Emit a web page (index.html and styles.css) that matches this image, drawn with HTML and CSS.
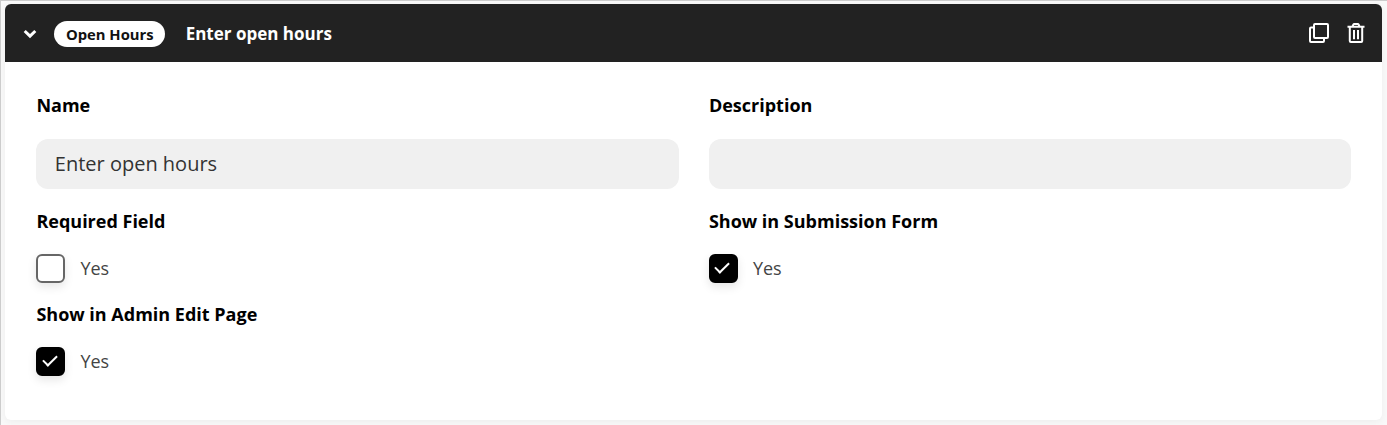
FILE: index.html
```html
<!DOCTYPE html>
<html lang="en">

<head>
  <meta charset="UTF-8">
  <meta name="viewport" content="width=device-width, initial-scale=1.0">
  <title>Open Hours</title>
  <link rel="stylesheet" href="styles.css">
</head>

<body>
  <div class="fields">
    <div class="field-card">
      <div class="field-header">
        <svg class="toggle" width="14" height="10" viewBox="0 0 14 10">
          <path d="M1.7 2 L7 7.1 L12.3 2" />
        </svg>
        <span class="field-type">Open Hours</span>
        <span class="field-title">Enter open hours</span>
        <div class="actions">
          <svg class="icon" width="22" height="22" viewBox="0 0 22 22">
            <path d="M7 2 H19 Q20 2 20 3 V15 Q20 16 19 16 H7 Q6 16 6 15 V3 Q6 2 7 2 Z M5.5 5.5 H3 Q2 5.5 2 6.5 V19 Q2 20 3 20 H15 Q16 20 16 19 V16.5" />
          </svg>
          <svg class="icon" width="18" height="22" viewBox="0 0 18 22">
            <path d="M0.5 4.8 H17.5 M5.5 4.5 L6.3 2.7 Q6.6 2 7.4 2 H10.6 Q11.4 2 11.7 2.7 L12.5 4.5 M2.8 5 V19 Q2.8 20 3.8 20 H14.2 Q15.2 20 15.2 19 V5 M7 8 V17.2 M11 8 V17.2" />
          </svg>
        </div>
      </div>

      <div class="field-body">
        <div class="field-group">
          <label class="label" for="name">Name</label>
          <input type="text" id="name" value="Enter open hours">
        </div>
        <div class="field-group">
          <label class="label" for="description">Description</label>
          <input type="text" id="description">
        </div>
        <div class="field-group">
          <div class="label">Required Field</div>
          <label class="check"><input type="checkbox"><span>Yes</span></label>
        </div>
        <div class="field-group">
          <div class="label">Show in Submission Form</div>
          <label class="check"><input type="checkbox" checked><span>Yes</span></label>
        </div>
        <div class="field-group">
          <div class="label">Show in Admin Edit Page</div>
          <label class="check"><input type="checkbox" checked><span>Yes</span></label>
        </div>
      </div>
    </div>
  </div>
</body>

</html>
```
FILE: styles.css
```css
* {
  box-sizing: border-box;
}

body {
  margin: 0;
  font-family: "Open Sans", "Noto Sans", sans-serif;
  background-color: #f9f9f9;
}

.fields {
  height: 425px;
  padding: 3.4px 4.6px 4.6px 4.4px;
  border-top: 1px solid #ccc;
  border-left: 1px solid #ccc;
  overflow: hidden;
}

.field-card {
  height: 416px;
  border-radius: 6px;
  background-color: #fff;
  box-shadow: 0 2px 8px rgba(0, 0, 0, 0.05);
}

.field-header {
  display: flex;
  align-items: center;
  height: 58px;
  padding: 1px 17px 0 18px;
  border-radius: 6px 6px 0 0;
  background-color: #222;
  color: #fff;
}

.toggle {
  fill: none;
  stroke: #fff;
  stroke-width: 3;
}

.field-type {
  margin-left: 17px;
  padding: 0 11.5px;
  border-radius: 13px;
  background-color: #fff;
  color: #111;
  font-size: 14.8px;
  font-weight: 700;
  line-height: 26px;
}

.field-title {
  margin-left: 20.5px;
  font-size: 17px;
  font-weight: 700;
}

.actions {
  display: flex;
  gap: 16.5px;
  margin-left: auto;
  margin-right: 0.6px;
  margin-bottom: 1px;
}

.icon {
  fill: none;
  stroke: #fff;
  stroke-width: 2;
}

.field-body {
  display: grid;
  grid-template-columns: 1fr 1fr;
  column-gap: 30px;
  padding: 30.8px 31px;
}

.label {
  display: block;
  color: #000;
  font-size: 18px;
  font-weight: 700;
  line-height: 25px;
}

input[type="text"] {
  display: block;
  width: 100%;
  height: 50px;
  margin: 21px 0 20px;
  padding: 0 18.4px 1px;
  border: none;
  border-radius: 12px;
  background-color: #f0f0f0;
  color: #333;
  font-family: inherit;
  font-size: 20px;
}

.check {
  display: flex;
  align-items: center;
  gap: 15px;
  height: 30px;
  margin: 19px 0;
  color: #444;
  font-size: 18px;
}

input[type="checkbox"] {
  appearance: none;
  width: 29px;
  height: 29px;
  margin: 0;
  border: 2px solid #666;
  border-radius: 6px;
  background: #fff;
  box-shadow: 0 4px 10px rgba(0, 0, 0, 0.1);
}

input[type="checkbox"]:checked {
  display: grid;
  place-items: center;
  border-color: #000;
  background: #000;
}

input[type="checkbox"]:checked::before {
  content: "";
  width: 6px;
  height: 12px;
  border: solid #fff;
  border-width: 0 2px 2px 0;
  transform: translate(-1px, -2px) rotate(45deg);
}
```
